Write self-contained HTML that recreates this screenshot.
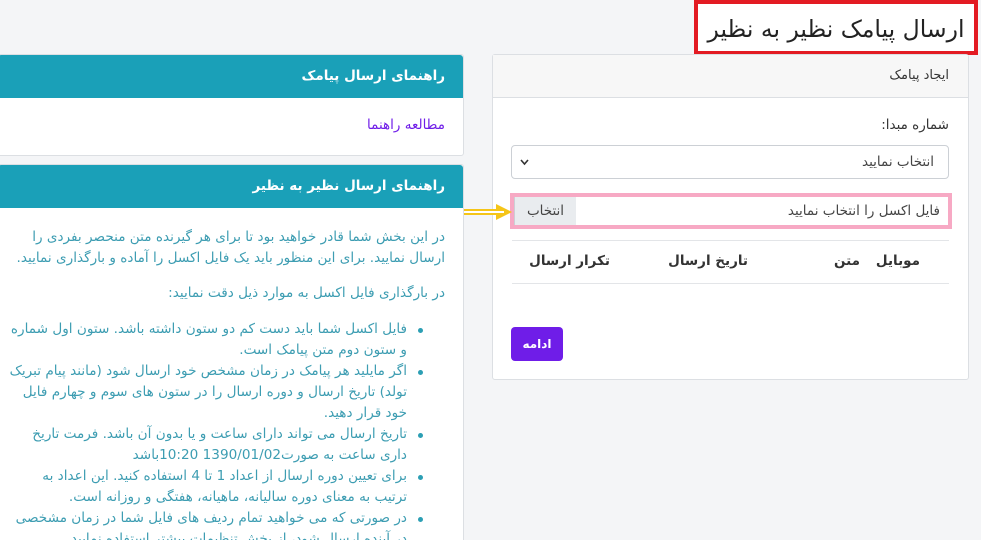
<!DOCTYPE html>
<html><head><meta charset="utf-8"><style>
*{box-sizing:border-box;margin:0;padding:0}
html,body{width:981px;height:540px;overflow:hidden}
body{background:#f4f5f7;font-family:"DejaVu Sans","Liberation Sans",sans-serif;direction:rtl;position:relative;color:#333}
.abs{position:absolute}
.title{left:694px;top:0;width:284px;height:55px;border:4px solid #e31b23;background:#fff;font-size:23.5px;text-align:center;line-height:50px;color:#222;white-space:nowrap;letter-spacing:-0.5px}
.card{background:#fff;border:1px solid #dcdfe3;border-radius:3px}
.teal{background:#1aa0b8;color:#fff;font-weight:bold;font-size:13.5px;padding-right:18px;line-height:43px;border-radius:3px 3px 0 0}
.txt{color:#3d9db2;font-size:13.6px;line-height:21px}
ul{padding-right:38px;padding-left:4px;list-style:none}
li{position:relative}
li:before{content:"";position:absolute;right:-16px;top:9px;width:5px;height:5px;border-radius:50%;background:#2c9fb4}
</style></head><body>
<div class="abs title">ارسال پیامک نظیر به نظیر</div>

<div class="abs card" style="left:492px;top:54px;width:477px;height:326px">
 <div style="background:#f7f7f7;height:43px;border-bottom:1px solid #dcdfe3;font-size:13px;line-height:42px;padding-right:19px">ایجاد پیامک</div>
 <div class="abs" style="right:19px;top:62px;font-size:13.5px">شماره مبدا:</div>
 <div class="abs" style="left:18px;top:90px;width:438px;height:34px;border:1px solid #ccd0d5;border-radius:4px;font-size:13.5px;line-height:32px;padding-right:14px;color:#444">انتخاب نمایید<svg style="position:absolute;left:8px;top:13px" width="9" height="7"><path d="M1 1 L4.5 5 L8 1" stroke="#333" stroke-width="1.6" fill="none"/></svg></div>
 <div class="abs" style="left:17px;top:138px;width:442px;height:36px;border:4px solid #f7a9c4;background:#fff">
  <div class="abs" style="right:0;top:0;bottom:0;left:62px;font-size:13.5px;line-height:28px;padding-right:8px;color:#444">فایل اکسل را انتخاب نمایید</div>
  <div class="abs" style="left:0;top:0;width:62px;height:28px;background:#e9ecef;border-left:1px solid #ccd0d5;font-size:13.5px;line-height:28px;text-align:center;color:#444">انتخاب</div>
 </div>
 <div class="abs" style="left:19px;right:19px;top:185px;border-top:1px solid #e3e5e8"></div>
 <div class="abs" style="left:19px;right:19px;top:228px;border-top:1px solid #e3e5e8"></div>
 <div class="abs" style="right:48px;top:198px;font-size:13.5px;font-weight:bold">موبایل</div>
 <div class="abs" style="right:108px;top:198px;font-size:13.5px;font-weight:bold">متن</div>
 <div class="abs" style="right:220px;top:198px;font-size:13.5px;font-weight:bold">تاریخ ارسال</div>
 <div class="abs" style="right:358px;top:198px;font-size:13.5px;font-weight:bold">تکرار ارسال</div>
 <div class="abs" style="left:18px;top:272px;width:52px;height:34px;background:#6f1de8;border-radius:4px;color:#fff;font-weight:bold;font-size:12px;line-height:34px;text-align:center">ادامه</div>
</div>

<svg class="abs" style="left:456px;top:201px" width="60" height="22"><path d="M2 8 H40 V3 L56 11 L40 19 V14 H2 Z" fill="#f5c518"/><path d="M4 11 H48" stroke="#fff" stroke-width="2"/></svg>

<div class="abs card" style="left:-3px;top:54px;width:467px;height:102px">
 <div class="teal">راهنمای ارسال پیامک</div>
 <div style="color:#6f1de8;font-size:13.5px;padding-right:18px;margin-top:19px">مطالعه راهنما</div>
</div>

<div class="abs card" style="left:-3px;top:164px;width:467px;height:376px;overflow:hidden;border-bottom:none;border-radius:3px 3px 0 0">
 <div class="teal">راهنمای ارسال نظیر به نظیر</div>
 <div class="txt" style="padding:19px 18px 0 6px">
  <p>در این بخش شما قادر خواهید بود تا برای هر گیرنده متن منحصر بفردی را ارسال نمایید. برای این منظور باید یک فایل اکسل را آماده و بارگذاری نمایید.</p>
  <p style="margin-top:14px">در بارگذاری فایل اکسل به موارد ذیل دقت نمایید:</p>
  <ul style="margin-top:15px">
   <li>فایل اکسل شما باید دست کم دو ستون داشته باشد. ستون اول شماره و ستون دوم متن پیامک است.</li>
   <li>اگر مایلید هر پیامک در زمان مشخص خود ارسال شود (مانند پیام تبریک تولد) تاریخ ارسال و دوره ارسال را در ستون های سوم و چهارم فایل خود قرار دهید.</li>
   <li>تاریخ ارسال می تواند دارای ساعت و یا بدون آن باشد. فرمت تاریخ داری ساعت به صورت1390/01/02 10:20باشد</li>
   <li>برای تعیین دوره ارسال از اعداد 1 تا 4 استفاده کنید. این اعداد به ترتیب به معنای دوره سالیانه، ماهیانه، هفتگی و روزانه است.</li>
   <li>در صورتی که می خواهید تمام ردیف های فایل شما در زمان مشخصی در آینده ارسال شود، از بخش تنظیمات بیشتر استفاده نمایید.</li>
  </ul>
 </div>
</div>
</body></html>
